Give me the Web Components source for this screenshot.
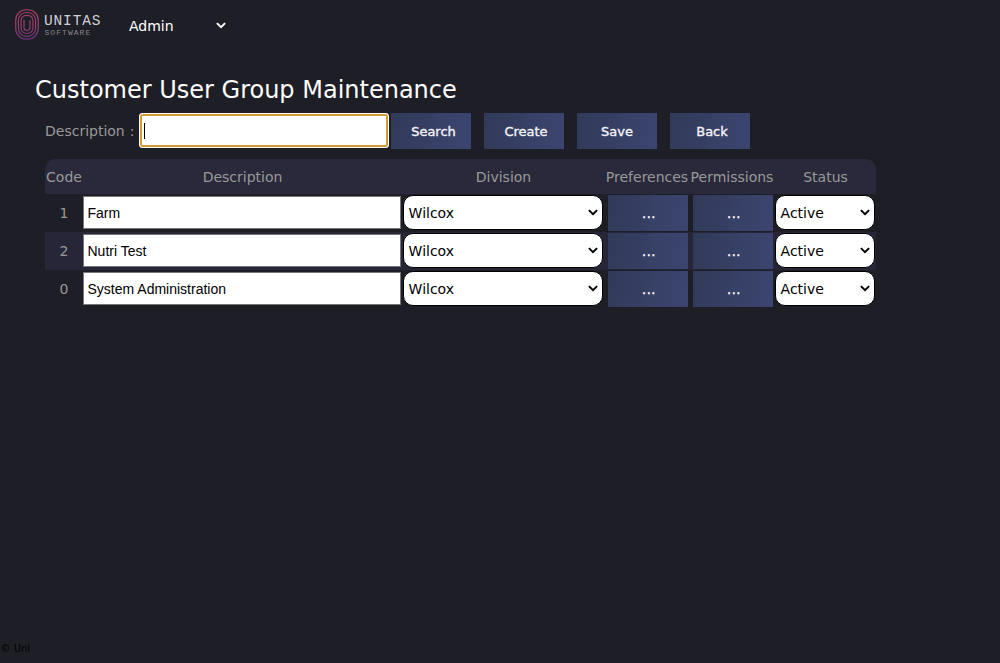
<!DOCTYPE html>
<html lang="en">
<head>
<meta charset="utf-8">
<title>Customer User Group Maintenance</title>
<style>
html,body{margin:0;height:100%;overflow:hidden;background:#1e1e26}
body{font-family:"DejaVu Sans",Verdana,sans-serif;font-size:14px;color:#999}
</style>
</head>
<body>
<group-page></group-page>
<script>
const define = (name, html) => {
  const template = document.createElement('template');
  template.innerHTML = html;
  customElements.define(name, class extends HTMLElement {
    constructor() {
      super();
      this.attachShadow({mode: 'open'}).append(template.content.cloneNode(true));
    }
  });
};

define('unitas-logo', `<style>
:host{display:flex;width:88px;height:32px;gap:5px}
svg{width:24px;height:31px;flex:none}
.words{display:flex;flex-direction:column;padding-top:5px;white-space:nowrap;font-family:"Liberation Mono",monospace}
.name{font-size:14.5px;line-height:15px;letter-spacing:.85px;color:#d0d0d4}
.sub{font-size:8px;line-height:7px;letter-spacing:1.05px;color:#85858b;padding-left:.5px}
</style>
<svg viewBox="0 0 24 31" fill="none"><defs><linearGradient id="g" gradientUnits="userSpaceOnUse" x1="0" y1="0" x2="0" y2="31"><stop stop-color="#a43f60"/><stop offset=".5" stop-color="#9c416e"/><stop offset="1" stop-color="#653579"/></linearGradient></defs>
<g stroke="url(#g)" stroke-width="1.15"><rect x=".7" y=".7" width="22.6" height="29.4" rx="10.5"/><rect x="3.4" y="3.5" width="17.2" height="23.8" rx="8"/><rect x="6" y="6.3" width="12" height="18.2" rx="5.6"/><path d="M9 11v7.5a3 3 0 0 0 6 0V11"/></g></svg>
<div class="words"><span class="name">UNITAS</span><span class="sub">SOFTWARE</span></div>`);

define('chevron-icon', `<style>:host{display:block;width:10px;height:7px;flex:none}svg{display:block}</style>
<svg width="10" height="7" viewBox="0 0 10 7" fill="none" stroke="currentColor" stroke-width="2"><path d="M.9 1.1 5 5.1 9.1 1.1"/></svg>`);

define('top-bar', `<style>
:host{display:flex;height:70px;padding:9px 0 0 15px;box-sizing:border-box}
.menu{display:flex;align-items:center;justify-content:space-between;width:97px;height:34px;margin-left:26px;color:#fff}
chevron-icon{margin-bottom:1px}
</style><unitas-logo></unitas-logo><div class="menu"><span>Admin</span><chevron-icon></chevron-icon></div>`);

define('action-button', `<style>
:host{display:flex;align-items:center;justify-content:center;box-sizing:border-box;width:80px;height:36px;padding:0 0 0 4px;background:linear-gradient(100deg,#313a58,#3c4570);color:#f4f4f8;font-size:13px;-webkit-text-stroke:.35px currentColor}
</style><slot></slot>`);

define('search-form', `<style>
:host{display:flex;align-items:center;height:36px;padding-left:45px}
.label{width:94px;white-space:pre;word-spacing:.5px}
.field{display:flex;align-items:center;box-sizing:border-box;width:250px;height:35px;margin:0 2px 1px 0;padding-left:4px;background:#fff;border:1px solid #fff;border-radius:3px;box-shadow:inset 0 0 0 2px #d49a35}
.caret{width:1px;height:16px;background:#000}
.actions{display:flex;gap:13px}
</style><span class="label">Description :</span><div class="field"><span class="caret"></span></div>
<div class="actions"><action-button style="padding-left:5px">Search</action-button><action-button>Create</action-button><action-button style="padding-left:0">Save</action-button><action-button>Back</action-button></div>`);

define('text-field', `<style>
:host{display:flex;align-items:center;box-sizing:border-box;width:318px;height:33px;padding:1px 0 0 3.5px;background:#fff;border:1px solid #767676;color:#000;font:14px "Liberation Sans",Arial,sans-serif}
</style><slot></slot>`);

define('select-field', `<style>
:host{display:flex;align-items:center;justify-content:space-between;box-sizing:border-box;height:35px;padding:0 4px;background:#fff;border:1px solid #000;border-radius:10px;color:#000}
chevron-icon{margin-bottom:1px}
</style><span><slot></slot></span><chevron-icon></chevron-icon>`);

define('table-head', `<style>
:host{display:grid;grid-template-columns:37px 320px 202px 85px 85px 102px;height:35px;align-items:center;justify-items:center;box-sizing:border-box;padding-left:.5px;background:#29293b;border-radius:10px 10px 0 0;white-space:nowrap}
</style><span>Code</span><span>Description</span><span>Division</span><span>Preferences</span><span>Permissions</span><span>Status</span>`);

define('group-row', `<style>
:host{display:grid;grid-template-columns:37px 320px 202px 85px 85px 102px;height:38px;align-items:center;justify-items:center;box-sizing:border-box}
:host(.alt){background:#262638}
text-field{margin-bottom:1px}
.division{width:200px;margin:0 0 1px 0;padding-left:4.6px}
.status{width:100px;margin:0 0 1px 0;padding-left:4.6px}
action-button{margin-left:2px;padding:0 0 0 3px;color:#fff;letter-spacing:.5px}
.code{padding-left:1px}
</style><span class="code"><slot name="code"></slot></span><text-field><slot name="description"></slot></text-field>
<select-field class="division">Wilcox</select-field><action-button>...</action-button><action-button>...</action-button><select-field class="status">Active</select-field>`);

define('group-table', `<style>:host{display:block;width:831px;margin:10px 0 0 45px}</style>
<table-head></table-head>
<group-row><span slot="code">1</span><span slot="description">Farm</span></group-row>
<group-row class="alt"><span slot="code">2</span><span slot="description">Nutri Test</span></group-row>
<group-row><span slot="code">0</span><span slot="description">System Administration</span></group-row>`);

define('group-page', `<style>
:host{display:flex;flex-direction:column;width:1000px;height:663px}
h1{margin:0;height:43px;padding-left:35px;font-size:24px;line-height:41px;font-weight:400;color:#fff}
footer{margin-top:auto;height:21px;font-size:10px;line-height:13px;color:#000;padding-left:.5px}
</style><top-bar></top-bar><h1>Customer User Group Maintenance</h1><search-form></search-form><group-table></group-table><footer>© Uni</footer>`);
</script>
</body>
</html>
